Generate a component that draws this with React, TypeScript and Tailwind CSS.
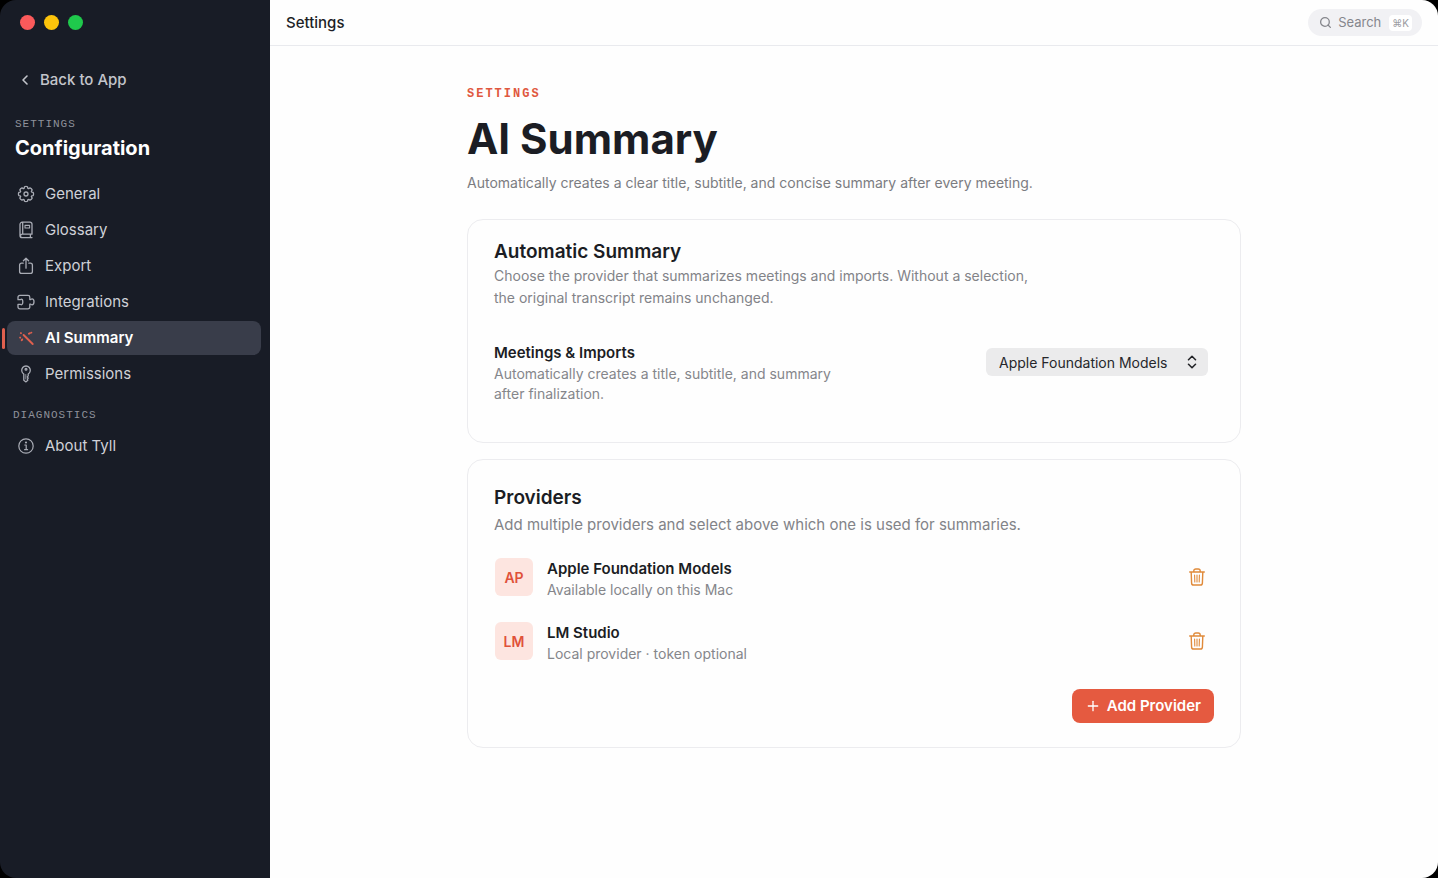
import React, { useState } from "react";
import { ChevronLeft, Plus, Search } from "lucide-react";
import { clsx } from "clsx";

const iconProps = {
    viewBox: "0 0 18 18",
    fill: "none",
    stroke: "currentColor",
    strokeLinecap: "round",
    strokeLinejoin: "round",
    "aria-hidden": true,
    className: "size-[18px] shrink-0",
} as const;

// Eight rounded teeth around a center of 9,9
const gearPath = (() => {
    const at = (radius: number, degrees: number) => {
        const a = (degrees * Math.PI) / 180;
        return `${(9 + radius * Math.cos(a)).toFixed(2)} ${(9 + radius * Math.sin(a)).toFixed(2)}`;
    };
    let d = `M${at(6, -18)}`;
    for (let i = 0; i < 8; i++) {
        const c = i * 45;
        d += `L${at(7.4, c - 12)}Q${at(8, c)} ${at(7.4, c + 12)}L${at(6, c + 18)}Q${at(5.8, c + 22.5)} ${at(6, c + 27)}`;
    }
    return d + "Z";
})();

const GearIcon = () => (
    <svg {...iconProps}>
        <path d={gearPath} strokeWidth="1.3" />
        <circle cx="9" cy="9" r="2" strokeWidth="1.3" />
    </svg>
);

const BookIcon = () => (
    <svg {...iconProps} strokeWidth="1.3">
        <path d="M15 13.2V3.2a2 2 0 0 0-2-2H5.2A2.2 2.2 0 0 0 3 3.4v11a2.2 2.2 0 0 0 2.2 2.2H15M15 13.2H5.2a1.7 1.7 0 0 0 0 3.4M13.4 13.2v3.4M5.7 1.2v12" />
        <path d="M8 4.4h4.6V7H8z" strokeWidth="1.1" />
    </svg>
);

const ExportIcon = () => (
    <svg {...iconProps} strokeWidth="1.3">
        <path d="M6.2 6.2H4.6a2 2 0 0 0-2 2v6.2a2 2 0 0 0 2 2h8.8a2 2 0 0 0 2-2V8.2a2 2 0 0 0-2-2h-1.6M9 11.2V1.3M6.4 3.7 9 1.2l2.6 2.5" />
    </svg>
);

const PuzzleIcon = () => (
    <svg {...iconProps} strokeWidth="1.3">
        <path d="M1 6.7V4.2a1.8 1.8 0 0 1 1.8-1.8H11a1.8 1.8 0 0 1 1.8 1.8v2.3h.8c.5 0 .6-.7 1.4-.7 1.2 0 2 1.2 2 3s-.8 3-2 3c-.8 0-.9-.7-1.4-.7h-.8V14a1.8 1.8 0 0 1-1.8 1.8H2.800A1.800 1.800 0 0 1 1 14v-2.700h2.200c.5 0 .6.500 1.100.500.900 0 1.500-1.100 1.500-2.800s-.6-2.800-1.500-2.800c-.5 0-.6.500-1.100.500z" />
    </svg>
);

const WandIcon = () => (
    <svg {...iconProps}>
        <path d="M6.6 6 15.700 15" strokeWidth="1.900" />
        <path d="M11.900 4.800l.8-.6M14.300 3.600h.1M3.100 8.600l.1.100M5.200 10.400l-.5.800M3.900 4.100l.1.100" strokeWidth="1.900" />
    </svg>
);

const KeyIcon = () => (
    <svg {...iconProps} strokeWidth="1.3">
        <path d="M6.800 9A4.300 4.300 0 1 1 11.200 9v1.900l-.9 1 .9 1.200-.9 1.200.5.900L9 16.900l-2.200-1.700z" />
        <circle cx="9" cy="4.200" r="0.900" />
        <path d="M8.800 9.500v4.500" strokeWidth="0.800" />
    </svg>
);

const InfoIcon = () => (
    <svg {...iconProps} strokeWidth="1.2">
        <circle cx="9" cy="9" r="7.2" />
        <path d="M7.800 8h1.400v4.600M7.600 12.700h3" />
        <circle cx="9" cy="5.500" r="0.500" fill="currentColor" />
    </svg>
);

const TrashIcon = () => (
    <svg {...iconProps} strokeWidth="1.4">
        <path d="M1.700 4h14.600M5.800 4V3a2 2 0 0 1 2-2h2.400a2 2 0 0 1 2 2v1M3.200 4.300l.4 10.800a2 2 0 0 0 2 1.900h6.800a2 2 0 0 0 2-1.900l.4-10.800" />
        <path d="M6.600 7l.2 7M9 7v7M11.400 7l-.2 7" strokeWidth="1.1" />
    </svg>
);

interface NavEntry {
    label: string;
    icon: React.FC;
    active?: boolean;
}

const settingsNav: NavEntry[] = [
    { label: "General", icon: GearIcon },
    { label: "Glossary", icon: BookIcon },
    { label: "Export", icon: ExportIcon },
    { label: "Integrations", icon: PuzzleIcon },
    { label: "AI Summary", icon: WandIcon, active: true },
    { label: "Permissions", icon: KeyIcon },
];

const diagnosticsNav: NavEntry[] = [{ label: "About Tyll", icon: InfoIcon }];

const providers = [
    { initials: "AP", name: "Apple Foundation Models", detail: "Available locally on this Mac" },
    { initials: "LM", name: "LM Studio", detail: "Local provider · token optional" },
];

const NavList: React.FC<{ items: NavEntry[]; label: string }> = ({ items, label }) => (
    <ul aria-label={label} className="flex flex-col gap-0.5">
        {items.map(({ label: text, icon: Icon, active }) => (
            <li key={text} className="relative">
                {active && <span className="absolute top-[7px] -left-[5px] h-[21px] w-[3px] rounded-full bg-[#e0604e]" />}
                <a
                    href="#"
                    aria-current={active ? "page" : undefined}
                    className={clsx(
                        "flex h-[34px] items-center gap-2.5 rounded-lg px-2.5 text-[15px]",
                        active ? "bg-[#393d4a] font-semibold text-white" : "text-[#cfd1d7]"
                    )}
                >
                    <span className={active ? "text-[#e0604e]" : "text-[#a9acb5]"}>
                        <Icon />
                    </span>
                    {text}
                </a>
            </li>
        ))}
    </ul>
);

const Sidebar = () => (
    <aside className="flex w-[270px] shrink-0 flex-col bg-[#181c26] pr-[9px] pl-[7px]">
        <div className="flex gap-[9px] pt-[15px] pl-[13px]">
            <span className="size-[15px] rounded-full bg-[#fb5a5b]" />
            <span className="size-[15px] rounded-full bg-[#fdc40b]" />
            <span className="size-[15px] rounded-full bg-[#1fc94c]" />
        </div>
        <a href="#" className="mt-[38px] flex h-6 items-center gap-[7px] pl-[10px] text-[15px] font-medium text-[#c3c5cb]">
            <ChevronLeft className="size-4" strokeWidth={2.4} />
            Back to App
        </a>
        <p className="mt-6 pl-2 font-['Liberation_Mono',monospace] text-[11px] leading-4 tracking-[1px] text-[#8f929b]">
            SETTINGS
        </p>
        <h2 className="mb-3 pl-2 text-[20px] leading-[33px] font-bold text-white">Configuration</h2>
        <nav aria-label="Settings">
            <NavList items={settingsNav} label="Configuration" />
            <p className="mt-4 mb-[6px] pl-[6px] font-['Liberation_Mono',monospace] text-[11px] leading-4 tracking-[1px] text-[#8f929b]">
                DIAGNOSTICS
            </p>
            <NavList items={diagnosticsNav} label="Diagnostics" />
        </nav>
    </aside>
);

const TopBar = () => (
    <header className="flex h-[46px] items-center justify-between border-b border-[#e9eaee] px-4">
        <span className="text-[15px] leading-6 font-medium text-[#1d1f26]">Settings</span>
        <button type="button" className="flex h-[27px] items-center gap-[6px] rounded-full bg-[#f1f1f4] pr-[10px] pl-[11px] text-[13px] text-[#85868c]">
            <Search className="size-[13px]" strokeWidth={2.4} />
            Search
            <kbd className="ml-0.5 rounded bg-white px-[3px] font-['Inter',sans-serif] text-[10px] leading-4 text-[#9b9ca2]">⌘K</kbd>
        </button>
    </header>
);

const SummaryCard = () => {
    const [provider, setProvider] = useState(providers[0].name);

    return (
        <section className="rounded-2xl border border-[#ececef] px-[26px] pt-[18px] pb-[38px]">
            <h2 className="text-[19px] leading-[27px] font-semibold text-[#1b1d24]">Automatic Summary</h2>
            <p className="max-w-[550px] text-[14px] leading-[22px] text-[#828388]">
                Choose the provider that summarizes meetings and imports. Without a selection, the original transcript remains unchanged.
            </p>
            <div className="mt-8 flex items-start justify-between">
                <div>
                    <label htmlFor="provider" className="block text-[15px] leading-[23px] font-semibold text-[#1b1d24]">
                        Meetings &amp; Imports
                    </label>
                    <p className="max-w-[340px] text-[14px] leading-5 text-[#85868b]">
                        Automatically creates a title, subtitle, and summary after finalization.
                    </p>
                </div>
                <div className="relative mt-[7px] mr-[6px]">
                    <select
                        id="provider"
                        value={provider}
                        onChange={(e) => setProvider(e.target.value)}
                        className="h-7 w-[222px] appearance-none rounded-md bg-[#ebebec] pr-8 pl-[13px] text-[14px] text-[#26272b]"
                    >
                        {providers.map((p) => (
                            <option key={p.name}>{p.name}</option>
                        ))}
                    </select>
                    <svg
                        viewBox="0 0 10 14"
                        fill="none"
                        stroke="#222327"
                        strokeWidth="1.6"
                        strokeLinecap="round"
                        strokeLinejoin="round"
                        aria-hidden
                        className="pointer-events-none absolute top-[7px] right-[11px] h-[14px] w-[10px]"
                    >
                        <path d="M1.500 4.700 5 1.300l3.500 3.400M1.500 9.300 5 12.700l3.500-3.400" />
                    </svg>
                </div>
            </div>
        </section>
    );
};

const ProvidersCard = () => (
    <section className="mt-4 rounded-2xl border border-[#ececef] px-[26px] pt-6 pb-6">
        <h2 className="text-[19px] leading-7 font-semibold text-[#1b1d24]">Providers</h2>
        <p className="mt-0.5 text-[15px] leading-[22px] text-[#828388]">
            Add multiple providers and select above which one is used for summaries.
        </p>
        <ul className="mt-[22px] flex flex-col gap-[22px]">
            {providers.map((p) => (
                <li key={p.name} className="flex items-start pr-2 pl-px">
                    <span className="flex size-[38px] items-center justify-center rounded-md bg-[#fde5e0] text-[14px] font-semibold text-[#e0513a]">
                        {p.initials}
                    </span>
                    <div className="ml-[14px] flex-1">
                        <h3 className="text-[15px] leading-[22px] font-semibold text-[#1b1d24]">{p.name}</h3>
                        <p className="text-[14px] leading-5 text-[#85868b]">{p.detail}</p>
                    </div>
                    <button type="button" aria-label={`Delete ${p.name}`} className="flex h-[38px] items-center text-[#e08a3a]">
                        <TrashIcon />
                    </button>
                </li>
            ))}
        </ul>
        <div className="mt-[25px] flex justify-end">
            <button type="button" className="flex h-[34px] items-center gap-[6px] rounded-lg bg-[#e55a40] px-[13px] text-[15px] font-semibold text-white">
                <Plus className="size-4" strokeWidth={2} />
                Add Provider
            </button>
        </div>
    </section>
);

export default function App() {
    return (
        <div className="min-h-screen bg-black font-['Inter','Liberation_Sans',sans-serif]">
            <div className="flex min-h-screen overflow-hidden rounded-2xl">
                <Sidebar />
                <div className="min-w-0 flex-1 bg-[#fefefe]">
                    <TopBar />
                    <main className="mx-auto max-w-[774px] pt-10 pb-10">
                        <p className="font-['Liberation_Mono',monospace] text-[12px] leading-4 font-bold tracking-[2px] text-[#e0583f]">SETTINGS</p>
                        <h1 className="mt-2 text-[42px] leading-[58px] font-bold text-[#1b1d24]">AI Summary</h1>
                        <p className="mt-1 mb-[25px] text-[14px] leading-[22px] text-[#7b7c81]">
                            Automatically creates a clear title, subtitle, and concise summary after every meeting.
                        </p>
                        <SummaryCard />
                        <ProvidersCard />
                    </main>
                </div>
            </div>
        </div>
    );
}
